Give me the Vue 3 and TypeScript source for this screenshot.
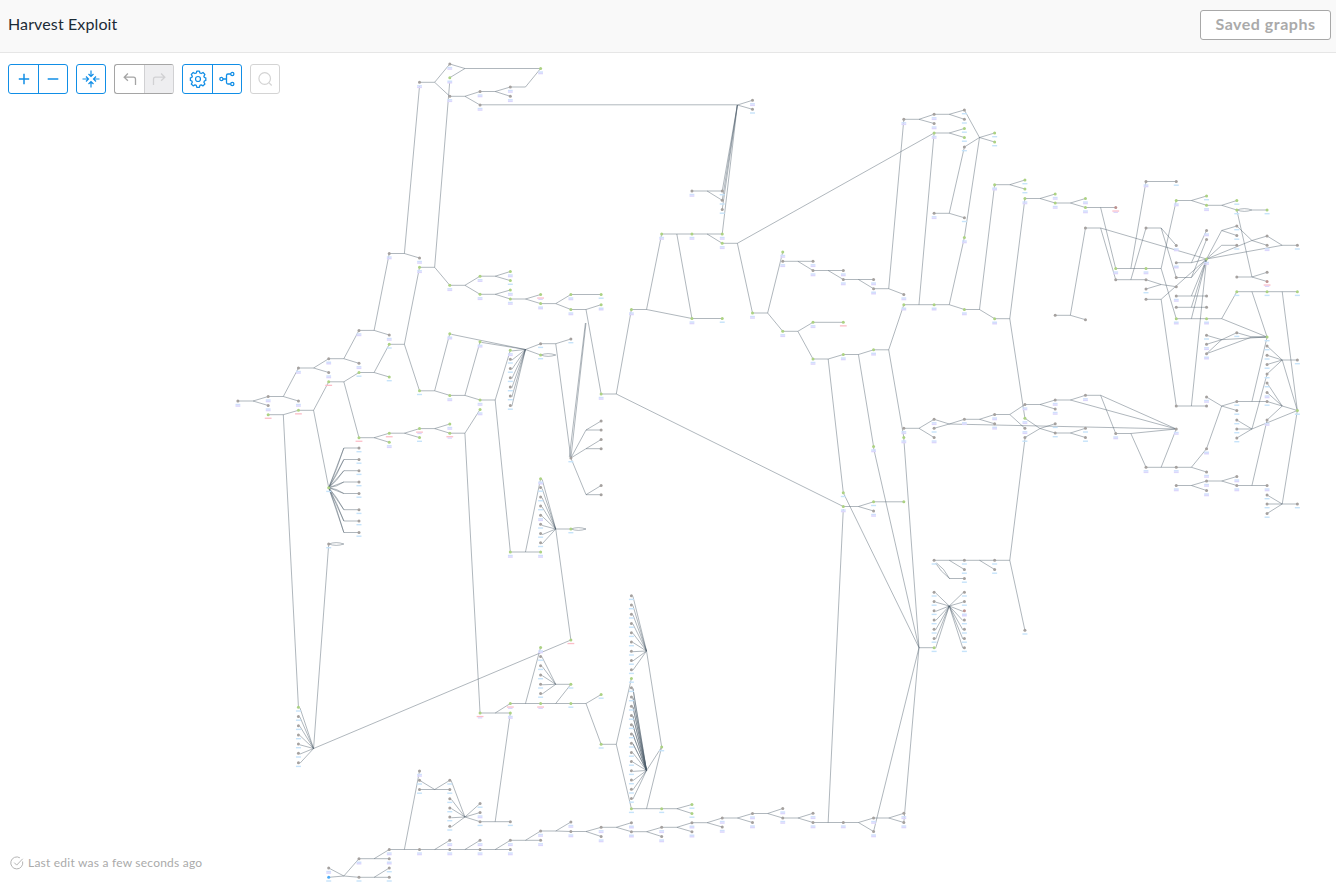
<script setup lang="ts">
interface GraphNode { x: number; y: number; tone: string; label: string }

const ORIGIN = 237.9
const STEP = 30.27
const colX = (c: number): number => +(ORIGIN + STEP * c).toFixed(2)

// Per column: y position, tone (k grey, g green, b blue, r red), label kind
// (0 none, 1 single, 2 double, 3 red, 4 red over lavender)
const columns: Record<number, string> = {
  0: '401k2',
  1: '396.5k2 405.5k2 414.7g3',
  2: '368k2 401k2 410.3g3 707.3g1 716.5k1 725.7k1 735k1 744k1 753.3k1 762.7k1',
  3: '358.7k2 372.5k2 381.8g3 487.7g1 544k1 868k2 877.3b1',
  4: '330.4k2 363.3k2 372.5g1 437.7g3 448k1 459.5k1 470.7k1 482k1 493.5k1 509.7k1 521k1 532.5k1 858.7k2 877.3k1',
  5: '253.5k2 335k2 344.3g1 377g1 433.2g3 442.3g2 849.5k2 858.7k2 868k1 877.3k1',
  6: '82.3k2 258k2 267.3g2 390.8g1 428.6g4 437.6g1 771k2 780.3k1 789.5k1 849.5k2',
  7: '64k2 77.7g2 96.3k2 285.3g2 333.7g2 395.4g2 424g2 433.2g4 780.3k1 789.5k1 798.7k1 808k1 817k1 826.3k1 840.3k2 849.5k2',
  8: '91.5k2 105k2 276.2g2 294.3g2 341.8g2 400g2 409.5g2 713g4 803.5k1 812.5k2 821.7k1 840.3k2 849.5k2',
  9: '87k2 96.3k2 271.5g2 280.6g1 290g2 299g2 350.3g2 359.3k1 368.5k1 377.7k1 387k1 396k1 405.5k1 552g2 703.5g4 713g2 821.7k1 840.3k2 849.5k2',
  10: '68.5g2 294.5g4 303.6g2 343.7k1 355g1 478.7g2 487.5k1 497k1 506k1 515.3k2 524.3k1 533.5k1 542.8k1 552g2 647.5g2 656.5k1 665.7k1 675k1 684.3k1 693.5k1 703.5g4 831k2 840.3k2',
  11: '294.5g2 309.5g2 339k1 458k1 529g1 640g3 684.3g1 703.5g1 822k2 831.5k2',
  12: '294.5g1 304.7g2 394g2 421k0 430k0 439.5k0 448.7k0 485.5k0 494.7k0 694.5g1 744.3g1 827.3k2 836.5k2',
  13: '309.5g2 595.7k1 605k1 614.3k1 623.5k1 632.7k1 642k1 651.3k1 660.5k1 669.7k1 678.5g1 687.7k1 697k1 706.3k1 715.5k1 724.7k1 734k1 743.3k1 752.5k1 761.5k1 770.7k1 780k1 789.3k1 798.5k1 808.7g1 822.7k2 831.7k2',
  14: '234g2 747g1 808.7g1 827.3k2 836.5k2',
  15: '191k2 234g2 318.5g2 804.5g1 813.5g1 822.7k2 831.7k2',
  16: '191k1 200.3k1 209.5k1 234g2 243.3g2 318.5g1 818k2 827k2',
  17: '100.3k2 109.3k1 313g2 813.5k2 822.5k2',
  18: '252g2 261.3k2 331.3g2 808.5k2 818k2',
  19: '261.3k2 270.5k2 322.3g2 359g2 813.3k2 822.5k2',
  20: '270.5k2 279.5k2 322.3g3 354.5g2 492.8g1 506.5g2 822.5k2',
  21: '279.5k2 288.7k2 349.8g2 446.5g2 501.8g1 511k2 818k2 831.5k2',
  22: '119.3k2 294.5k2 304.7g2 428.3k2 437.5g2 501.8g0 813.3k2 822.5k2',
  23: '114.3k2 123.5k2 133g2 213.3k2 304.7g2 419.3k2 428.3k1 437.5k2 560.3k1 592.3k1 601.5k1 610.7k1 620k1 629.3k1 638.5k1 647.7g1',
  24: '110k1 119.3k1 128.5g1 137.5g1 147k1 217.8k1 237.5g2 309.5g2 419.3k2 560.3k1 569.5k1 578.5k1 592.3k1 601.5k1 610.7r2 620k1 629.3k1 638.5k1 647.7k1',
  25: '133g1 142g1 184.7g2 318.7g2 414.5k2 423.8k2 560.3k1 569.5k1',
  26: '180g1 189g1 198.5g2 404.5k2 418.3g2 428.3k2 437.5k1 630.3k1',
  27: '194g2 203g2 315.3k0 400k2 409k2 423.7k1 433k1',
  28: '198.5g2 207.5g2 228k0 319.7k0 395.3k2 428.3k1 437.5k1',
  29: '207.5r4 268.5g2 279.7k0 433.5k2',
  30: '181.5k2 228k0 268.5g2 279.7k0 289k1 299.3k0 467.3k2',
  31: '181.5k1 200.5g2 245.5k2 262.7k2 277.5k0 286.7k0 296k2 307.3k0 318.7g2 406k0 429k2 467.3k2 485.5k2',
  32: '196g1 205.3g2 230.5k2 239.5k0 259g2 296k0 307.3k0 318.7g2 335.3k1 344.3k2 353.7k2 397k2 406k0 448.7k2 472k2 481k2 490.5k2',
  33: '200.5g1 210g1 226k1 235.5k1 245.3k1 277k0 291.7g1 332.7k1 401.5k1 410.5k1 420k1 429k1 438k1 476.5k2 485.5k2',
  34: '210g1 236k0 245.3k2 272.3k0 281.5r4 291.7g1 337g1 346k1 355.3k1 364.5k1 374k1 383k1 392.5k2 401.5k1 420k2 485.5k2 495k1 504k1 513.5k1',
  35: '245.3k1 291.7g1 360k1 410.5g1 504k1',
}

// Polylines as alternating column / y values
const routes: string[] = [
  // upper left
  '6 82.3 6.5 82.3 7 64 7.5 68.5 10 68.5 9.5 87 9 87', '6.5 82.3 7 96.3 7.5 96.3 8 91.5 8.5 91.5 9 87',
  '7 77.7 7.5 68.5', '8.5 91.5 9 96.3', '7.5 96.3 8 105', '8 104.8 16.5 104.8', '16.5 105 17 100.3', '16.5 105 17 109.3',
  '16.5 105 16 191', '16.5 105 16 200.3', '16.5 105 16 209.5', '16.5 105 16 234', '15 191 16 191', '15.5 191 16 200.3',
  '6 86 5.5 253.5', '7 81 6.5 267.3', '5 253.5 5.5 253.5 6 258', '6 267.3 6.5 267.3 7 285.3 7.5 285.3 8 276.2 8.5 276.2 9 271.5',
  '8.5 276.2 9 280.6', '7.5 285.3 8 294.3 8.5 294.3 9 290', '8.5 294.3 9 299 9.5 299 10 294.5', '9.5 299 10 303.6 10.5 303.6 11 294.5 12 294.5',
  '10.5 303.6 11 309.5 11.5 309.5 12 304.7', '11.5 309.5 12 394 12.5 394 13 309.5 13.5 309.5 14 234 16 234',
  '12.5 394 20 506.5', '13.5 309.5 15 318.5 16 318.5', '14.5 234 15 318.5', '15.5 234 16 243.3 16.5 243.3 23 133', '16.5 243.3 17 313',
  // left trunk
  '0 401 .5 401 1 396.5 1.5 396.5 2 368 2.5 368 3 358.7 3.5 358.7 4 330.4 4.5 330.4 5 253.5',
  '.5 401 1 405.5', '1.5 396.5 2 401', '2.5 368 3 372.5', '3.5 358.7 4 363.3', '4.5 330.4 5 335',
  '1 414.7 1.5 414.7 2 410.3 2.5 410.3 3 381.8 3.5 381.8 4 372.5 4.5 372.5 5 344.3 5.5 344.3 6 267.3',
  '1.5 414.7 2 707.3', '2.5 410.3 3 487.7', '3.5 381.8 4 437.7', '4.5 372.5 5 377',
  '5.5 344.3 6 390.8 6.5 390.8 7 395.4 7.5 395.4 8 400 8.5 400 9 350.3', '6.5 390.8 7 333.7', '7.5 395.4 8 341.8', '8.5 400 9 552 10 552',
  '4 437.7 4.5 437.7 5 433.2 5.5 433.2 6 428.6 6.5 428.6 7 424', '4.5 437.7 5 442.3', '5.5 433.2 6 437.6',
  '6.5 428.6 7 433.2 7.5 433.2 8 409.5', '7.5 433.2 8 713 9 713', '3 544 2.5 748.5', '2.5 748.5 11 640',
  '9.5 349.5 10 343.7 10.5 343.7 11 339', '9.5 349.5 10 355', '10.5 343.7 11 458',
  '11 458 11.5 323', '10.95 457 11.48 323', '11 458 11.5 430 12 430', '11.5 430 12 421', '11 458 11.5 448.7 12 448.7', '11.5 448.7 12 439.5',
  '11 458 11.5 494.7 12 494.7', '11.5 494.7 12 485.5', '9.5 552 10 478.7', '10.5 529 11 529', '10.5 529 11 640',
  // lower left
  '8.5 713 9 703.5', '9 703.5 11.5 703.5 12 694.5', '9.5 703.5 10 647.5', '10.5 703.5 11 684.3 10.5 684.3', '11.5 703.5 12 744.3 12.5 744.3 13 678.5',
  '12.5 744.3 13 808.7 14.5 808.7 15 804.5', '14.5 808.7 15 813.5', '13.5 808.7 14 747', '13.5 651 14 747', '13.5 770.5 14 747',
  '9 713 8.5 821.7', '8 821.7 9 821.7', '7.5 817 8 803.5', '7.5 817 8 812.5', '7.5 817 8 821.7', '6 780.3 6.5 789.5 7 780.3', '6 789.5 7 789.5',
  '6 771 5.5 849.5', '5 849.5 9 849.5', '6.5 849.5 7 840.3', '7.5 849.5 8 840.3', '8.5 849.5 9 840.3 10 840.3', '9.5 840.3 10 831 10.5 831 11 822',
  '10.5 831 11 831.5 11.5 831.5 12 827.3 12.5 827.3 13 822.7', '11.5 831.5 12 836.5', '12.5 827.3 13 831.7 13.5 831.7 14 827.3 14.5 827.3 15 822.7 15.5 822.7 16 818 16.5 818 17 813.5 17.5 813.5 18 808.5',
  '13.5 831.7 14 836.5', '14.5 827.3 15 831.7', '15.5 822.7 16 827', '16.5 818 17 822.5', '17.5 813.5 18 818 18.5 818 19 813.3',
  '18.5 818 19 822.5 20.5 822.5 21 818 21.5 818 22 813.3', '20.5 822.5 21 831.5', '21.5 818 22 822.5',
  '3 868 3.5 876 4 858.7 5 858.7', '3 877.3 3.5 876 4 877.3 5 877.3', '4.5 858.7 5 849.5', '4.5 877.3 5 868',
  // middle
  '17 313 17.5 313 18 252', '17.5 313 18 331.3 18.5 331.3 19 322.3 20 322.3', '18.5 331.3 19 359 19.5 359 20 354.5 20.5 354.5 21 349.8 21.5 349.8 22 304.7 23.5 304.7 24 309.5 24.5 309.5 25 318.7 25.5 318.7 26 198.5',
  '19.5 359 20 492.8', '20.5 354.5 21 446.5', '21.5 349.8 22 437.5', '18 261.3 19 261.3', '18.5 261.3 19 270.5 20 270.5', '19.5 270.5 20 279.5 21 279.5',
  '20.5 279.5 21 288.7 21.5 288.7 22 294.5', '21.5 288.7 22 119.3', '22.5 304.7 23 133', '23.5 304.7 24 237.5', '24.5 309.5 25 184.7', '25.5 318.7 26 418.3',
  '20 492.8 22.5 647.7', '20 506.5 20.5 506.5 21 501.8 22 501.8', '20.5 506.5 21 511', '20 509 19.5 822.5', '21 448 22.5 647.7', '22 439 22.5 647.7', '22.5 647.7 23 647.7', '22.5 647.7 21 831.5', '22.5 647.7 22 822.5',
  '22 119.3 22.5 119.3 23 114.3 23.5 114.3 24 110 24.5 137.5 25 133', '22.5 119.3 23 123.5', '23.5 114.3 24 119.3', '23 133 23.5 133 24 128.5', '23.5 133 24 137.5',
  '24 147 24.5 137.5 25 142', '24.5 137.5 24 237.5', '24 147 23.5 213.3', '23 213.3 23.5 213.3 24 217.8', '25 184.7 25.5 184.7 26 180', '25.5 184.7 26 189',
  '26 198.5 26.5 198.5 27 194', '26.5 198.5 27 203 27.5 203 28 198.5', '27.5 203 28 207.5 29 207.5', '28.5 207.5 29 268.5', '28 228 28.5 228 29 279.7', '28.5 228 32 259', '28 228 27.5 315.3', '27 315.3 27.5 315.3 28 319.7',
  // right centre
  '22 428.3 22.5 428.3 23 419.3 23.5 424 31 429', '22.5 428.3 23 437.5', '23 428.3 23.5 424 24 419.3 24.5 419.3 25 414.5 25.5 414.5 26 404.5 26.5 404.5 27 400 27.5 400 28 395.3 28.5 395.3 31 429',
  '24.5 419.3 25 423.8', '25.5 414.5 26 428.3', '26.5 404.5 27 409', '27.5 400 31 429', '28.5 395.3 29 433.5 29.5 433.5 31 429', '29.5 433.5 30 467.3 31.5 467.3 32 448.7 32.5 406', '30.5 467.3 31 429', '31.5 467.3 32 472',
  '26 418.3 26.5 428.5 27 423.7', '26 437.5 26.5 428.5 27 433 27.5 433 28 428.3', '27.5 433 28 437.5', '26 439 25.5 560.3', '23 560.3 25.5 560.3 26 630.3', '23.5 560.3 24 569.5', '24.5 560.3 25 569.5', '23.5 578.5 24 578.5',
  // right cluster
  '29 268.5 30.5 268.5 31 200.5 31.5 200.5 32 196', '29.5 268.5 30 181.5 31 181.5', '29 279.7 30 279.7 30.5 284.5 31 286.7', '29.5 279.7 30 228', '30 289 30.5 284.5', '30 299.3 30.5 299.3 32 259', '30.5 299.3 31 406 32 406',
  '30 228 30.5 228 31 245.5', '30.5 228 31 277.5', '30.5 268.5 31 318.7 32.5 318.7 33 291.7 35 291.7', '31.5 200.5 32 205.3 32.5 205.3 33 200.5', '32.5 205.3 33 210', '33.5 210 34 210', '33 210 33.5 277', '33 277 33.5 277 34 272.3', '33.5 277 34 281.5',
  '31 262.7 31.5 262.7 32 230.5', '31.5 262.7 32 259', '31 277.5 31.5 277.5 32 239.5', '31.5 277.5 32 259', '31 296 32 296', '31.5 296 32 259', '31 307.3 32 307.3', '31.5 307.3 32 259', '31.5 318.7 32 259', '31.5 406 32 259',
  '32 259 32.5 230.5 33 226 33.5 240.5 34 236 34.5 245.3 35 245.3', '32.5 230.5 33 235.5', '32 259 32.5 245.3 33 245.3', '32 259 33.5 240.5 34 245.3', '32 259 34.5 245.3',
  '32.5 318.7 34 337', '33.5 291.7 34 337', '34.5 291.7 35 410.5', '32 335.3 32.5 339.7 33 332.7 33.5 337 34 337', '32 344.3 32.5 339.7 34 337', '32 353.7 32.5 339.7', '32 353.7 33.5 337 34 337', '34 337 33.5 401.5',
  '34 346 34.5 360', '34 355.3 34.5 360', '34 364.5 34.5 360', '34 374 34.5 360 35 360', '34.5 360 35 410.5', '34 383 34.5 406', '34 392.5 34.5 406', '34 401.5 34.5 406', '34 420 34.5 406 35 410.5', '34 374 33.5 429', '33 420 33.5 429', '33 429 33.5 429', '33 438 33.5 429 35 410.5',
  '34 420 33.5 485.5', '32 397 32.5 406 33 401.5 34 401.5', '32.5 406 33 410.5', '31 485.5 31.5 485.5 32 481 32.5 481 33 476.5', '31.5 485.5 32 490.5', '32.5 481 33 485.5 34 485.5', '34 495 34.5 504', '34 513.5 34.5 504', '34 504 35 504', '34.5 504 35 410.5',
]

interface Fan { from: number; to: number; y: number; ys: number[]; tail?: boolean }
const range = (start: number, n: number): number[] => Array.from({ length: n }, (_, i) => start + i * 9.23)
const fans: Fan[] = [
  { from: 9.5, to: 9, y: 349.5, ys: range(350.3, 7) },
  { from: 9.5, to: 8, y: 349.5, ys: [341.8] },
  { from: 9.5, to: 7, y: 349.5, ys: [333.7] },
  { from: 10.5, to: 10, y: 529, ys: range(478.7, 8) },
  { from: 2.5, to: 2, y: 748.5, ys: range(707.3, 7) },
  { from: 10.5, to: 10, y: 684.3, ys: range(656.5, 5) },
  { from: 7.5, to: 7, y: 817, ys: [780.3, ...range(798.7, 4)] },
  { from: 13.5, to: 13, y: 651, ys: range(595.7, 9) },
  { from: 13.5, to: 13, y: 770.5, ys: range(687.7, 13) },
  { from: 13.5, to: 13, y: 770.5, ys: range(687.7, 7) },
  { from: 23.5, to: 23, y: 606, ys: range(592.3, 7) },
  { from: 23.5, to: 24, y: 606, ys: range(592.3, 7) },
  { from: 3, to: 3.5, y: 487.7, ys: [448, 459.5, 470.7, 482, 493.5, 509.7, 521, 532.5], tail: true },
]

const toPath = (route: string): string => {
  const v = route.split(' ').map(Number)
  let d = ''
  for (let i = 0; i < v.length; i += 2) d += `${i ? 'L' : 'M'}${colX(v[i])} ${v[i + 1]}`
  return d
}

const edges: string[] = routes.map(toPath)
for (const f of fans) {
  for (const y of f.ys) {
    if (f.tail) {
      const bend = y < f.y ? 2 : -2
      edges.push(`M${colX(f.from)} ${f.y}L${colX(f.to)} ${y}H${colX(4)}`)
      edges.push(`M${colX(f.from)} ${f.y}Q${colX(3.27)} ${(f.y + y) / 2 + bend} ${colX(f.to)} ${y}`)
    } else {
      const dir = f.to > f.from ? -1 : 1
      edges.push(`M${colX(f.from)} ${f.y}L${colX(f.to) + dir * 1.5} ${y + 0.6}`)
    }
  }
}
const loops: [number, number][] = [[3, 544], [10, 355], [11, 529], [33, 210]]
for (const [c, y] of loops) {
  const a = colX(c)
  const b = colX(c + 0.5)
  edges.push(`M${a} ${y}C${a + 5} ${y - 1.8} ${b - 5} ${y - 1.8} ${b} ${y}`)
  edges.push(`M${a} ${y}C${a + 5} ${y + 1.8} ${b - 5} ${y + 1.8} ${b} ${y}`)
}
edges.push('M936.5 563Q944 568 949.5 578.5', 'M935.5 563Q940 571 949.5 578.5')

const nodes: GraphNode[] = Object.entries(columns).flatMap(([c, list]) =>
  list.split(' ').map((s) => ({ x: colX(+c), y: parseFloat(s), tone: s[s.length - 2], label: s[s.length - 1] })),
)
</script>

<template>
  <div class="page">
    <header class="bar">
      <h1 class="title">Harvest Exploit</h1>
      <button class="saved">Saved graphs</button>
    </header>
    <main class="stage">
      <svg class="graph" width="1336" height="836" viewBox="0 53 1336 836">
        <path v-for="(d, i) in edges" :key="i" :d="d" class="edge" />
        <g v-for="(n, i) in nodes" :key="'n' + i">
          <rect v-if="n.label === '1'" class="l-blue" :x="n.x - 2.5" :y="n.y + 3" width="5" height="1.4" />
          <template v-else-if="n.label === '2'">
            <rect class="l-mix" :x="n.x - 2.4" :y="n.y + 2.8" width="4.8" height="1.5" />
            <rect class="l-lav" :x="n.x - 2.4" :y="n.y + 4.3" width="4.8" height="1.5" />
          </template>
          <template v-else-if="n.label !== '0'">
            <rect class="l-red" :x="n.x - 3.4" :y="n.y + 2.9" width="6.8" height="1.3" />
            <rect v-if="n.label === '4'" class="l-lav" :x="n.x - 2.2" :y="n.y + 4.2" width="4.4" height="1.3" />
          </template>
          <circle :cx="n.x" :cy="n.y" r="1.5" :class="'t-' + n.tone" />
        </g>
      </svg>
      <nav class="tools">
        <div class="group">
          <button><svg viewBox="0 0 20 20"><path d="M10 4.800v10.400M4.800 10h10.400" stroke-width="1.5" /></svg></button>
          <button><svg viewBox="0 0 20 20"><path d="M4.7 10h10.6" stroke-width="1.5" /></svg></button>
        </div>
        <div class="group">
          <button class="lone"><svg viewBox="0 0 20 20"><path d="M10 1.500v6M7.500 5 10 7.500 12.500 5M10 18.500v-6M7.500 15l2.500-2.500 2.500 2.500M1.500 10h6M5 7.500 7.500 10 5 12.500M18.500 10h-6M15 7.500 12.500 10l2.500 2.500" /></svg></button>
        </div>
        <div class="group grey">
          <button><svg viewBox="0 0 20 20"><path d="M7.900 4.500 4.200 8.200l3.700 3.600M4.200 8.200h9.300a2 2 0 0 1 2 2V16" stroke-width="1.300" /></svg></button>
          <button class="off"><svg viewBox="0 0 20 20"><path d="M12.100 4.500l3.700 3.700-3.700 3.600M15.800 8.200H6.500a2 2 0 0 0-2 2V16" stroke-width="1.300" /></svg></button>
        </div>
        <div class="group">
          <button><svg viewBox="0 0 20 20"><circle cx="10" cy="10" r="2.500" /><path d="M8.700 2.700h2.600l.5 1.900 1.300.5 1.800-1 1.900 1.900-1 1.800.5 1.300 1.400.4v2.600l-1.400.4-.5 1.300 1 1.800-1.900 1.900-1.800-1-1.300.5-.5 1.900H8.700l-.5-1.900-1.300-.5-1.800 1-1.900-1.900 1-1.800-.5-1.300-1.400-.4V9.500l1.400-.4.5-1.300-1-1.800 1.900-1.900 1.800 1 1.300-.5z" transform="translate(.1 -.6)" stroke-linejoin="round" stroke-width="1.300" /></svg></button>
          <button><svg viewBox="0 0 20 20"><g stroke-width="1.300"><circle cx="4.400" cy="10" r="1.600" /><circle cx="15.300" cy="5" r="1.600" /><circle cx="15.300" cy="15" r="1.600" /><path d="M6 10h3.500M13.700 5h-2.700a1.500 1.500 0 0 0-1.500 1.500v7a1.500 1.500 0 0 0 1.500 1.500h2.700" /></g></svg></button>
        </div>
        <div class="group pale">
          <button class="lone"><svg viewBox="0 0 20 20"><circle cx="9.700" cy="9.500" r="5.800" /><path d="m13.900 13.700 2.800 2.800" /></svg></button>
        </div>
      </nav>
      <div class="status">
        <svg width="14" height="14" viewBox="0 0 14 14"><path d="M12.600 5.500A6 6 0 1 1 9.900 1.800M4.200 6.600l2.500 2.500 6-6.300" /></svg>
        <span>Last edit was a few seconds ago</span>
      </div>
    </main>
  </div>
</template>

<style>
body { margin: 0; overflow: hidden; }
</style>

<style scoped>
.page { width: 1336px; height: 889px; display: flex; flex-direction: column; background: #fff; font-family: Lato, "Noto Sans", sans-serif; }
.bar { box-sizing: border-box; height: 53px; flex: none; display: flex; align-items: flex-start; justify-content: space-between; padding: 10px 5px 0 8px; background: #f9f9f9; border-bottom: 1px solid #e6e6e6; }
.title { margin: 0; font-size: 16px; line-height: 27px; font-weight: 400; letter-spacing: 0.12px; color: #1c2b36; }
.saved { box-sizing: border-box; width: 131px; height: 30px; padding: 0 0 3px; border: 1px solid #a8a8a8; border-radius: 3px; background: #fff; color: #aaa; font: 700 16px/25px Lato, sans-serif; letter-spacing: 0.52px; }
.stage { position: relative; flex: 1; }
.graph { display: block; }
.edge { fill: none; stroke: #4a5c68; stroke-width: 0.85; stroke-opacity: 0.52; }
.t-k { fill: #a5a19f; }
.t-g { fill: #acd283; }
.t-b { fill: #4aa9f5; }
.t-r { fill: #bd9290; }
.l-blue { fill: #c6e3fa; }
.l-mix { fill: #cfe0fc; }
.l-lav { fill: #dcd6fc; }
.l-red { fill: #fcbdc8; }
.tools { position: absolute; left: 8px; top: 11px; display: flex; gap: 8px; }
.group { box-sizing: border-box; height: 30px; display: flex; border: 1px solid #118ee6; border-radius: 3px; color: #118ee6; background: #fff; overflow: hidden; }
.group button { box-sizing: border-box; width: 29px; height: 28px; padding: 0; border: 0; background: none; color: inherit; display: flex; align-items: center; justify-content: center; }
.group button:first-child:not(.lone) { width: 30px; border-right: 1px solid currentColor; }
.group button:last-child:not(.lone) { width: 28px; }
.group .lone { width: 28px; }
.group svg { width: 20px; height: 20px; fill: none; stroke: currentColor; stroke-width: 1.2; }
.grey { border-color: #a5a5a5; color: #a5a5a5; }
.grey .off { color: #d1d1d3; background: #eeeef0; }
.grey button:first-child:not(.lone) { border-right-color: #d1d1d3; }
.grey { border-right-color: #d1d1d3; }
.pale { border-color: #d4d4d4; color: #d4d4d4; }
.status { position: absolute; left: 10px; bottom: 17px; display: flex; align-items: center; gap: 4px; height: 18px; font-size: 12px; line-height: 18px; letter-spacing: 0.22px; color: #aaa; }
.status svg { fill: none; stroke: #b5b5b5; stroke-width: 1; }
</style>
